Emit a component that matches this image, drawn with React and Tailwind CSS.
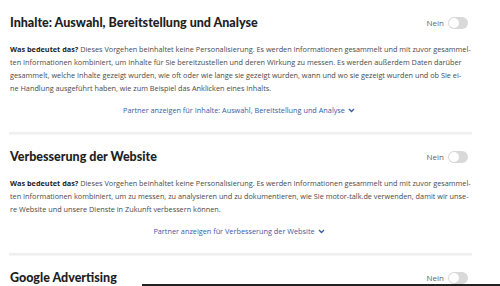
import React from 'react';

const sections = [
  {
    title: 'Inhalte: Auswahl, Bereitstellung und Analyse',
    lines: [
      'Dieses Vorgehen beinhaltet keine Personalisierung. Es werden Informationen gesammelt und mit zuvor gesammel-',
      'ten Informationen kombiniert, um Inhalte für Sie bereitzustellen und deren Wirkung zu messen. Es werden außerdem Daten darüber',
      'gesammelt, welche Inhalte gezeigt wurden, wie oft oder wie lange sie gezeigt wurden, wann und wo sie gezeigt wurden und ob Sie ei-',
      'ne Handlung ausgeführt haben, wie zum Beispiel das Anklicken eines Inhalts.',
    ],
    link: 'Partner anzeigen für Inhalte: Auswahl, Bereitstellung und Analyse',
  },
  {
    title: 'Verbesserung der Website',
    lines: [
      'Dieses Vorgehen beinhaltet keine Personalisierung. Es werden Informationen gesammelt und mit zuvor gesammel-',
      'ten Informationen kombiniert, um zu messen, zu analysieren und zu dokumentieren, wie Sie motor-talk.de verwenden, damit wir unse-',
      're Website und unsere Dienste in Zukunft verbessern können.',
    ],
    link: 'Partner anzeigen für Verbesserung der Website',
  },
];

function Toggle() {
  return (
    <div className="flex items-center gap-[4px]">
      <span className="text-[8px] text-[#666]">Nein</span>
      <span className="w-[20px] h-[12px] rounded-full bg-[#d9d9d9] flex items-center px-[1px]">
        <span className="w-[10px] h-[10px] rounded-full bg-white" />
      </span>
    </div>
  );
}

function Header({ title }) {
  return (
    <div className="flex items-center justify-between">
      <h2
        className="text-[12.5px] font-black text-[#1e1e1e] leading-[16px]"
        style={{ fontFamily: 'Lato, sans-serif' }}
      >
        {title}
      </h2>
      <Toggle />
    </div>
  );
}

export default function App() {
  return (
    <div
      className="w-[500px] h-[286px] overflow-hidden bg-white relative pl-[10px] pr-[32px] pt-[15px]"
      style={{ fontFamily: '"Open Sans", sans-serif' }}
    >
      {sections.map((s) => (
        <div key={s.title} className="mb-[15px]">
          <Header title={s.title} />
          <div className="mt-[12px] text-[7.3px] leading-[13px] text-[#4a4a4a] whitespace-nowrap">
            {s.lines.map((l, i) => (
              <div key={i}>
                {i === 0 && <b className="text-[#1e1e1e] font-bold">Was bedeutet das? </b>}
                {l}
              </div>
            ))}
          </div>
          <div className="mt-[10px] flex justify-center items-center gap-[3px] text-[7.3px] text-[#3a5ba6]">
            <span>{s.link}</span>
            <svg width="7" height="5" viewBox="0 0 7 5"><path d="M1 1l2.5 2.5L6 1" fill="none" stroke="#3a5ba6" strokeWidth="1.3" /></svg>
          </div>
          <div className="mt-[16px] mr-[-4px] ml-[-1px] h-[2px] bg-[#efefef] shadow-[0_1px_1px_rgba(0,0,0,0.04)]" />
        </div>
      ))}
      <Header title="Google Advertising" />
      <div className="absolute left-[142px] right-0 bottom-0 h-[2px] bg-[#222]" />
    </div>
  );
}
